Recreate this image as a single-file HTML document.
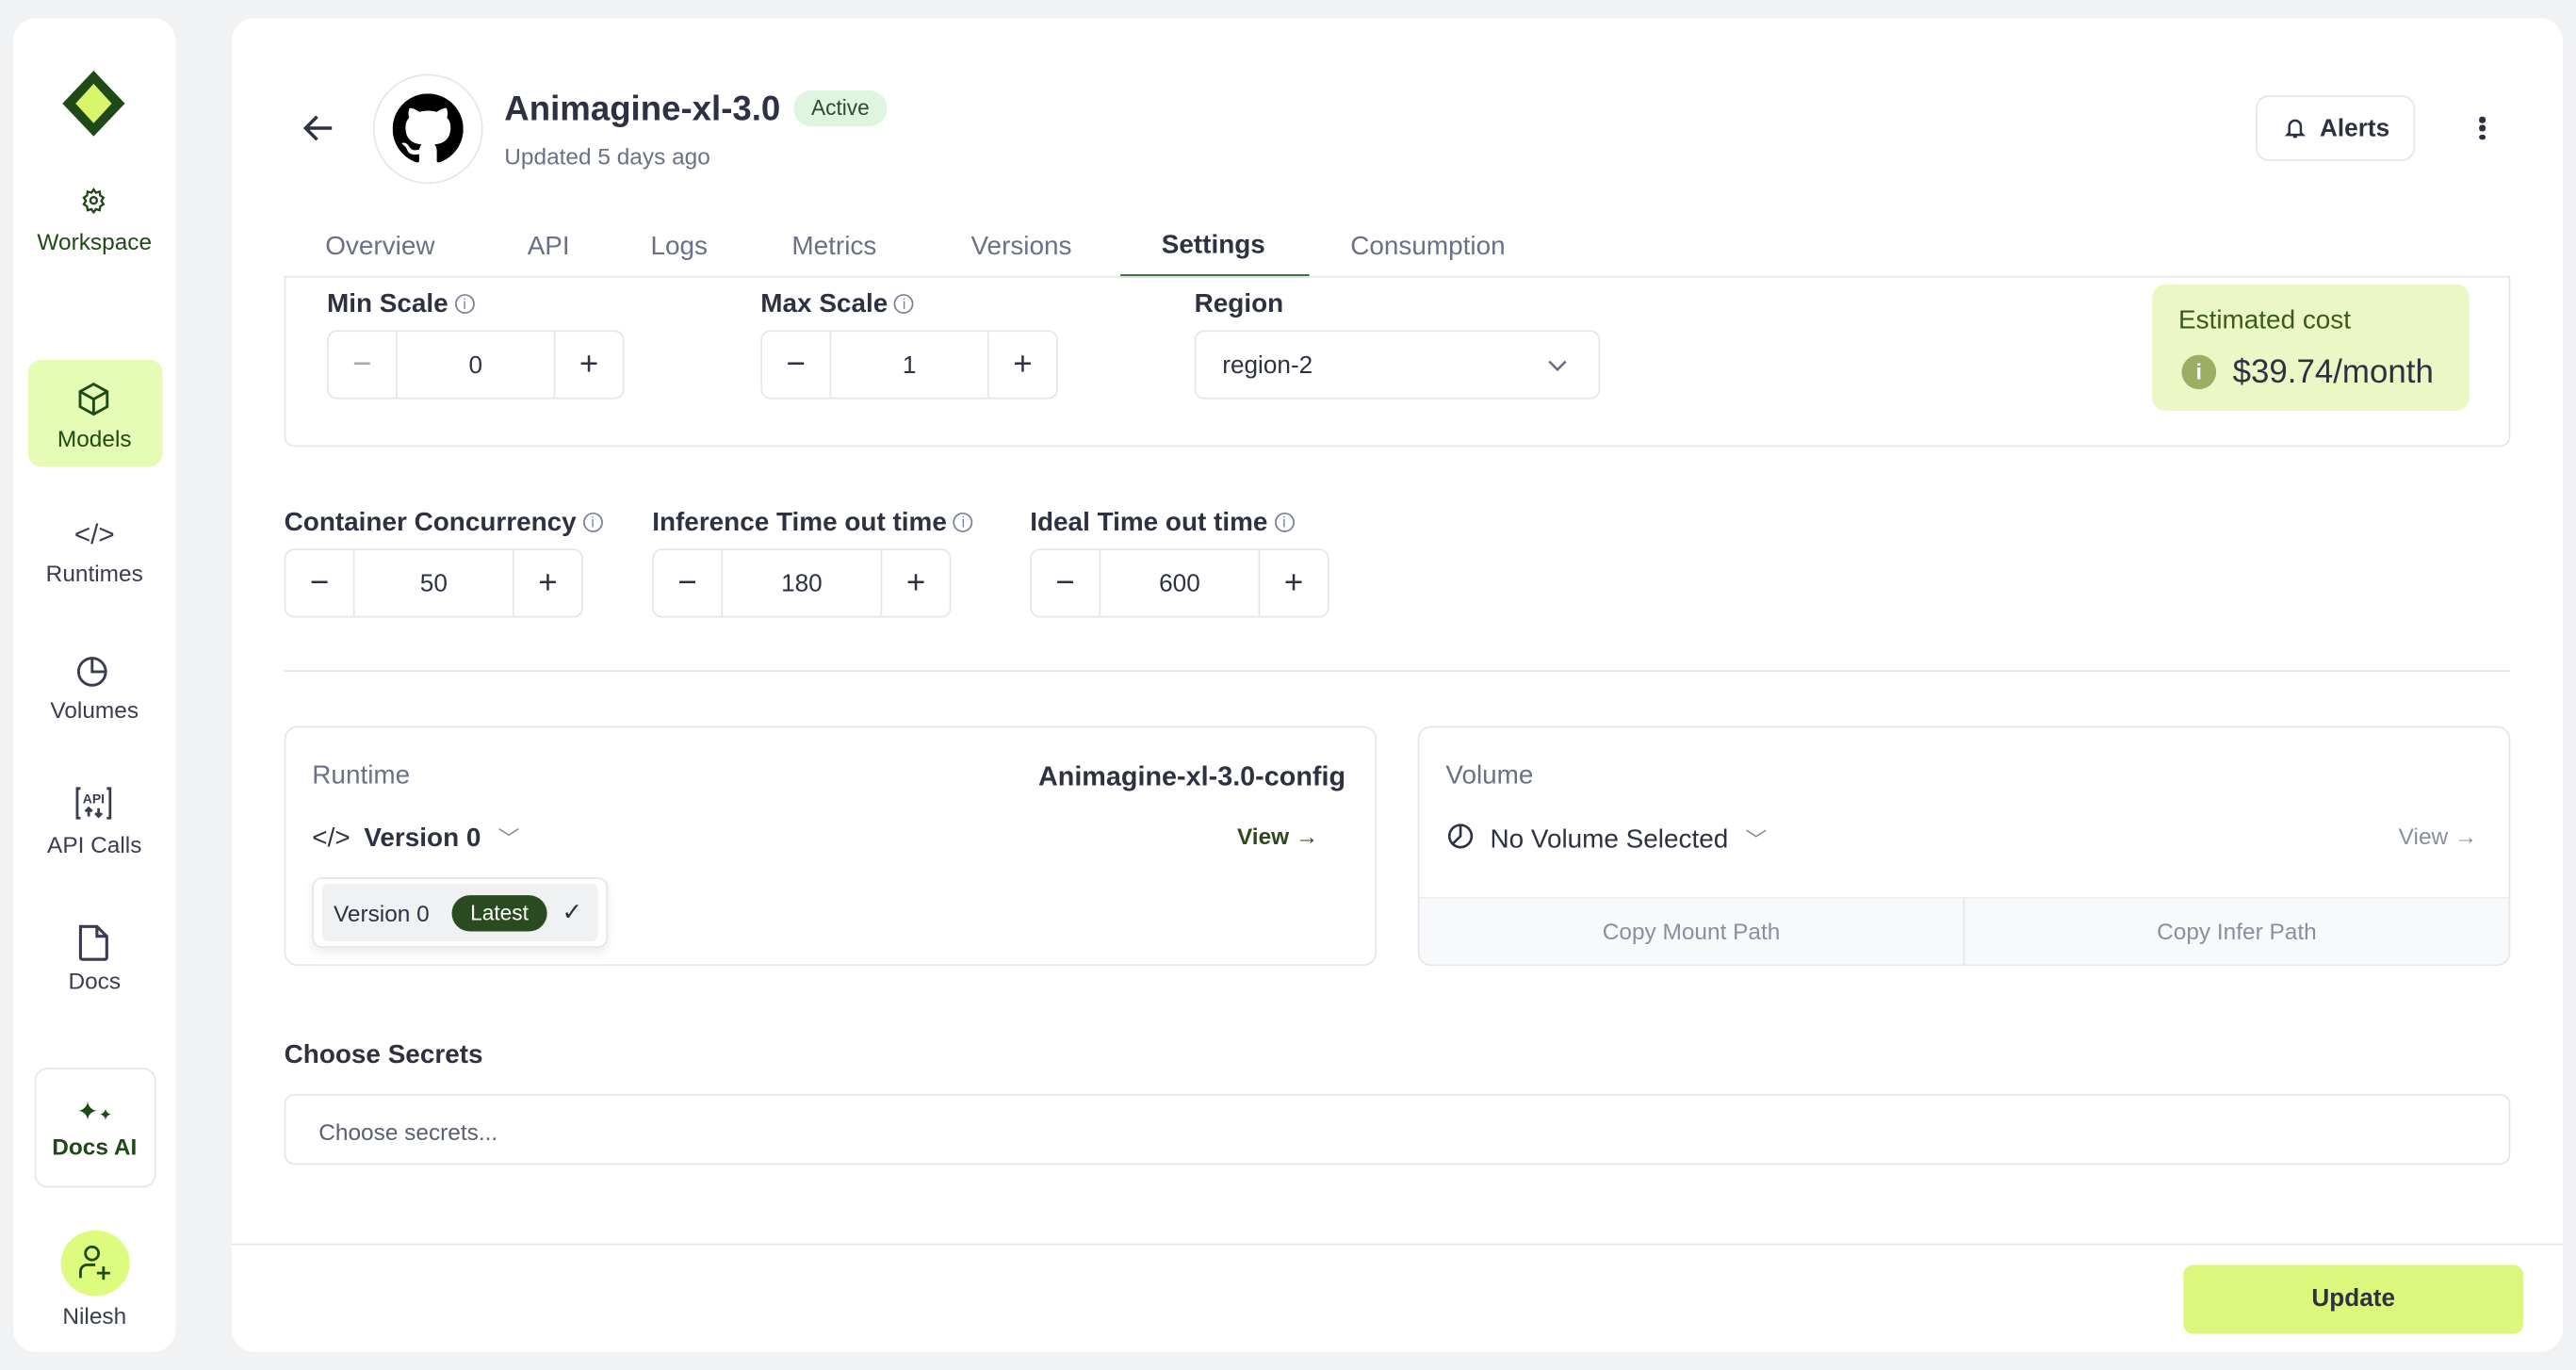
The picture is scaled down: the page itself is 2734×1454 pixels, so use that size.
<!DOCTYPE html>
<html><head><meta charset="utf-8"><style>
*{box-sizing:border-box;margin:0;padding:0}
html,body{width:2734px;height:1454px;overflow:hidden;background:#f1f2f4}
#s{position:absolute;left:0;top:0;width:1568px;height:834px;transform:scale(1.74362,1.7434);transform-origin:0 0;font-family:"Liberation Sans",sans-serif;color:#2e3142}
.a{position:absolute}
.card{position:absolute;background:#fff;border-radius:14px}
.nav{position:absolute;left:8px;width:99px;text-align:center;font-size:14px;color:#3a3d50}
.b{border:1px solid #e5e6ea}
.lab{position:absolute;font-size:16px;font-weight:bold;color:#2e3142}
.info{display:inline-block;width:12px;height:12px;border:1px solid #7b8098;border-radius:50%;font-size:9px;line-height:10px;text-align:center;color:#7b8098;font-weight:normal;vertical-align:2px;margin-left:4px}
.st{position:absolute;height:42px;border:1px solid #e5e6ea;border-radius:6px;display:flex}
.st div{display:flex;align-items:center;justify-content:center;font-size:15px}
.st .m,.st .p{width:41px;font-size:20px;color:#2e3142}
.st .v{flex:1;border-left:1px solid #e5e6ea;border-right:1px solid #e5e6ea}
.tab{position:absolute;top:142px;font-size:16px;color:#6b7088}
</style></head><body><div id="s">
<div class="card" style="left:8px;top:11px;width:99px;height:812px"></div>
<div class="card" style="left:141px;top:11px;width:1419px;height:812px"></div>
<svg class="a" style="left:38px;top:43px" width="38" height="40" viewBox="0 0 38 40"><path d="M19 0L38 20L19 40L0 20Z" fill="#1f4a17"/><path d="M19 8L30 20L19 32L8 20Z" fill="#d6f56a"/></svg>
<svg class="a" style="left:49px;top:114px" width="16" height="16" viewBox="0 0 24 24" fill="none" stroke="#1f4a17" stroke-width="2"><circle cx="12" cy="12" r="3"/><path d="M12 2l2 3 3.5-1 .5 3.5 3 2-2 3 2 3-3 2-.5 3.5-3.5-1-2 3-2-3-3.5 1-.5-3.5-3-2 2-3-2-3 3-2 .5-3.5 3.5 1z"/></svg>
<div class="nav" style="top:139px;color:#1f4a17">Workspace</div>
<div class="a" style="left:17px;top:219px;width:82px;height:65px;background:#e6fbb5;border-radius:8px"></div>
<svg class="a" style="left:46px;top:232px" width="22" height="22" viewBox="0 0 24 24" fill="none" stroke="#1f4a17" stroke-width="1.8"><path d="M12 2l9 5v10l-9 5-9-5V7z"/><path d="M3 7l9 5 9-5M12 12v10"/></svg>
<div class="nav" style="top:259px;color:#1f4a17">Models</div>
<div class="nav" style="top:316px;font-size:17px">&lt;/&gt;</div>
<div class="nav" style="top:341px">Runtimes</div>
<svg class="a" style="left:46px;top:397px" width="22" height="22" viewBox="0 0 24 24" fill="none" stroke="#3a3d50" stroke-width="1.8"><circle cx="11" cy="13" r="9"/><path d="M11 4v9h9"/></svg>
<div class="nav" style="top:424px">Volumes</div>
<svg class="a" style="left:45px;top:478px" width="24" height="24" viewBox="0 0 24 24" fill="none" stroke="#3a3d50" stroke-width="1.6"><path d="M4 2H2v18h2M20 2h2v18h-2"/><text x="12" y="11" font-size="8" font-weight="bold" fill="#3a3d50" stroke="none" text-anchor="middle" font-family="Liberation Sans">API</text><path d="M9 19v-5M7 16l2-2 2 2M15 14v5M13 17l2 2 2-2"/></svg>
<div class="nav" style="top:506px">API Calls</div>
<svg class="a" style="left:46px;top:562px" width="22" height="24" viewBox="0 0 22 24" fill="none" stroke="#3a3d50" stroke-width="1.8"><path d="M3 2h10l6 6v13a1 1 0 0 1-1 1H4a1 1 0 0 1-1-1z"/><path d="M13 2v6h6"/></svg>
<div class="nav" style="top:589px">Docs</div>
<div class="a b" style="left:21px;top:650px;width:74px;height:73px;border-radius:8px"></div>
<div class="nav" style="top:667px;color:#1f4a17;font-size:16px">✦<span style="font-size:10px">✦</span></div>
<div class="nav" style="top:690px;color:#1f4a17;font-weight:bold">Docs AI</div>
<div class="a" style="left:37px;top:749px;width:42px;height:40px;background:#dcfb7f;border-radius:50%"></div>
<svg class="a" style="left:46px;top:757px" width="24" height="24" viewBox="0 0 24 24" fill="none" stroke="#1f4a17" stroke-width="1.6"><circle cx="10" cy="6" r="4"/><path d="M3 21v-4a4 4 0 0 1 4-4h5M17 14v8M13 18h8"/></svg>
<div class="nav" style="top:793px">Nilesh</div>

<svg class="a" style="left:184px;top:68px" width="20" height="20" viewBox="0 0 20 20" fill="none" stroke="#2e3142" stroke-width="2"><path d="M18 10H3M9 3l-7 7 7 7"/></svg>
<div class="a b" style="left:227px;top:45px;width:67px;height:67px;border-radius:50%"></div>
<svg class="a" style="left:239px;top:57px" width="43" height="43" viewBox="0 0 16 16"><path fill="#000" d="M8 0C3.58 0 0 3.580 0 8c0 3.54 2.29 6.53 5.47 7.59.4.07.55-.17.55-.38 0-.19-.01-.82-.01-1.49-2.010.37-2.53-.49-2.69-.94-.09-.23-.48-.94-.82-1.13-.28-.15-.68-.52-.01-.53.63-.01 1.08.58 1.230.82.72 1.21 1.87.87 2.33.66.07-.52.28-.87.51-1.07-1.78-.2-3.64-.89-3.64-3.95 0-.87.31-1.59.82-2.15-.08-.2-.36-1.02.08-2.12 0 0 .67-.21 2.2.82.64-.18 1.32-.27 2-.27.68 0 1.36.09 2 .27 1.53-1.04 2.2-.82 2.2-.82.44 1.1.16 1.92.08 2.12.51.56.82 1.27.82 2.15 0 3.07-1.87 3.75-3.65 3.95.29.25.54.73.54 1.48 0 1.07-.01 1.93-.01 2.2 0 .21.15.46.55.38A8.013 8.013 0 0016 8c0-4.42-3.58-8-8-8z"/></svg>
<div class="a" style="left:307px;top:55px;font-size:21px;font-weight:bold">Animagine-xl-3.0</div>
<div class="a" style="left:483px;top:55px;width:57px;height:22px;background:#dff5df;border-radius:11px;font-size:13px;text-align:center;line-height:22px;color:#2e4a2e">Active</div>
<div class="a" style="left:307px;top:87px;font-size:14px;color:#6b7088">Updated 5 days ago</div>
<div class="a b" style="left:1373px;top:58px;width:97px;height:40px;border-radius:8px;font-size:15px;font-weight:bold;line-height:40px;padding-left:38px">Alerts</div>
<svg class="a" style="left:1390px;top:71px" width="14" height="14" viewBox="0 0 24 24" fill="none" stroke="#2e3142" stroke-width="2.4"><path d="M6 17V10a6 6 0 0 1 12 0v7l2 2H4zM10 21h4"/></svg>
<div class="a" style="left:1509px;top:71px;width:4px"><div style="width:3.5px;height:3.5px;background:#2e3142;border-radius:50%;margin-bottom:1.8px"></div><div style="width:3.5px;height:3.5px;background:#2e3142;border-radius:50%;margin-bottom:1.8px"></div><div style="width:3.5px;height:3.5px;background:#2e3142;border-radius:50%"></div></div>

<div class="tab" style="left:198px">Overview</div><div class="tab" style="left:321px">API</div><div class="tab" style="left:396px">Logs</div><div class="tab" style="left:482px">Metrics</div><div class="tab" style="left:591px">Versions</div><div class="tab" style="left:707px;color:#2e3142;font-weight:bold;top:141px">Settings</div><div class="tab" style="left:822px">Consumption</div>
<div class="a" style="left:682px;top:167px;width:115px;height:2px;background:#2d5a27"></div>

<div class="a b" style="left:173px;top:168px;width:1355px;height:104px;border-radius:0 0 6px 6px"></div>
<div class="lab" style="left:199px;top:177px">Min Scale<span class="info">i</span></div>
<div class="st" style="left:199px;top:201px;width:181px"><div class="m" style="color:#aaa">−</div><div class="v">0</div><div class="p">+</div></div>
<div class="lab" style="left:463px;top:177px">Max Scale<span class="info">i</span></div>
<div class="st" style="left:463px;top:201px;width:181px"><div class="m">−</div><div class="v">1</div><div class="p">+</div></div>
<div class="lab" style="left:727px;top:177px">Region</div>
<div class="st" style="left:727px;top:201px;width:247px;padding-left:16px;font-size:15px;align-items:center">region-2</div>
<svg class="a" style="left:941px;top:215px" width="14" height="14" viewBox="0 0 14 14" fill="none" stroke="#6b7088" stroke-width="1.5"><path d="M2 5l5 5 5-5"/></svg>
<div class="a" style="left:1310px;top:173px;width:193px;height:77px;background:#ebf8c6;border-radius:8px"></div>
<div class="a" style="left:1326px;top:187px;font-size:16px;color:#3d5a1e">Estimated cost</div>
<div class="a" style="left:1328px;top:216px;width:21px;height:21px;background:#9aae64;border-radius:50%;color:#fff;font-size:13px;font-weight:bold;text-align:center;line-height:21px">i</div>
<div class="a" style="left:1359px;top:216px;font-size:20px;color:#2e3142">$39.74/month</div>

<div class="lab" style="left:173px;top:310px">Container Concurrency<span class="info">i</span></div>
<div class="st" style="left:173px;top:334px;width:182px"><div class="m">−</div><div class="v">50</div><div class="p">+</div></div>
<div class="lab" style="left:397px;top:310px">Inference Time out time<span class="info">i</span></div>
<div class="st" style="left:397px;top:334px;width:182px"><div class="m">−</div><div class="v">180</div><div class="p">+</div></div>
<div class="lab" style="left:627px;top:310px">Ideal Time out time<span class="info">i</span></div>
<div class="st" style="left:627px;top:334px;width:182px"><div class="m">−</div><div class="v">600</div><div class="p">+</div></div>
<div class="a" style="left:173px;top:408px;width:1355px;height:1px;background:#e2e3e7"></div>

<div class="a b" style="left:173px;top:442px;width:665px;height:146px;border-radius:8px"></div>
<div class="a" style="left:190px;top:464px;font-size:16px;color:#6b7088">Runtime</div>
<div class="a" style="left:632px;top:464px;font-size:16.5px;font-weight:bold">Animagine-xl-3.0-config</div>
<div class="a" style="left:190px;top:500px;font-size:16px">&lt;/&gt; <span style="font-size:16px;font-weight:bold;margin-left:4px">Version 0</span> <span style="color:#888;font-size:13px;margin-left:6px">﹀</span></div>
<div class="a" style="left:753px;top:501px;font-size:14px;color:#2d4a1e;font-weight:bold">View →</div>
<div class="a b" style="left:190px;top:534px;width:180px;height:43px;border-radius:6px;box-shadow:0 3px 6px rgba(0,0,0,.08)"></div>
<div class="a" style="left:196px;top:538px;width:168px;height:35px;background:#f0f1f3;border-radius:4px"></div>
<div class="a" style="left:203px;top:548px;font-size:14px">Version 0</div>
<div class="a" style="left:275px;top:545px;width:58px;height:22px;background:#2a4a20;color:#fff;border-radius:11px;font-size:13px;text-align:center;line-height:22px">Latest</div>
<div class="a" style="left:342px;top:546px;font-size:15px">✓</div>

<div class="a b" style="left:863px;top:442px;width:665px;height:146px;border-radius:8px"></div>
<div class="a" style="left:880px;top:464px;font-size:16px;color:#6b7088">Volume</div>
<svg class="a" style="left:880px;top:500px" width="18" height="18" viewBox="0 0 24 24" fill="none" stroke="#2e3142" stroke-width="2"><circle cx="12" cy="12" r="9"/><path d="M12 3v9l-6 6"/></svg>
<div class="a" style="left:907px;top:501px;font-size:16px">No Volume Selected <span style="color:#888;font-size:13px;margin-left:6px">﹀</span></div>
<div class="a" style="left:1460px;top:501px;font-size:14px;color:#8a8f9f">View →</div>
<div class="a" style="left:864px;top:546px;width:663px;height:41px;background:#f8f9fa;border-top:1px solid #eceef0;border-radius:0 0 8px 8px"></div>
<div class="a" style="left:1195px;top:547px;width:1px;height:40px;background:#e5e6ea"></div>
<div class="a" style="left:864px;top:559px;width:331px;text-align:center;font-size:14px;color:#8a8f9f">Copy Mount Path</div>
<div class="a" style="left:1196px;top:559px;width:331px;text-align:center;font-size:14px;color:#8a8f9f">Copy Infer Path</div>

<div class="lab" style="left:173px;top:634px">Choose Secrets</div>
<div class="a b" style="left:173px;top:666px;width:1355px;height:43px;border-radius:6px;padding:14px 20px;font-size:14px;color:#5b6072">Choose secrets...</div>
<div class="a" style="left:141px;top:757px;width:1419px;height:1px;background:#e5e6ea"></div>
<div class="a" style="left:1329px;top:770px;width:207px;height:42px;background:#dcf77c;border-radius:6px;text-align:center;line-height:42px;font-size:15px;font-weight:bold">Update</div>
</div></body></html>
